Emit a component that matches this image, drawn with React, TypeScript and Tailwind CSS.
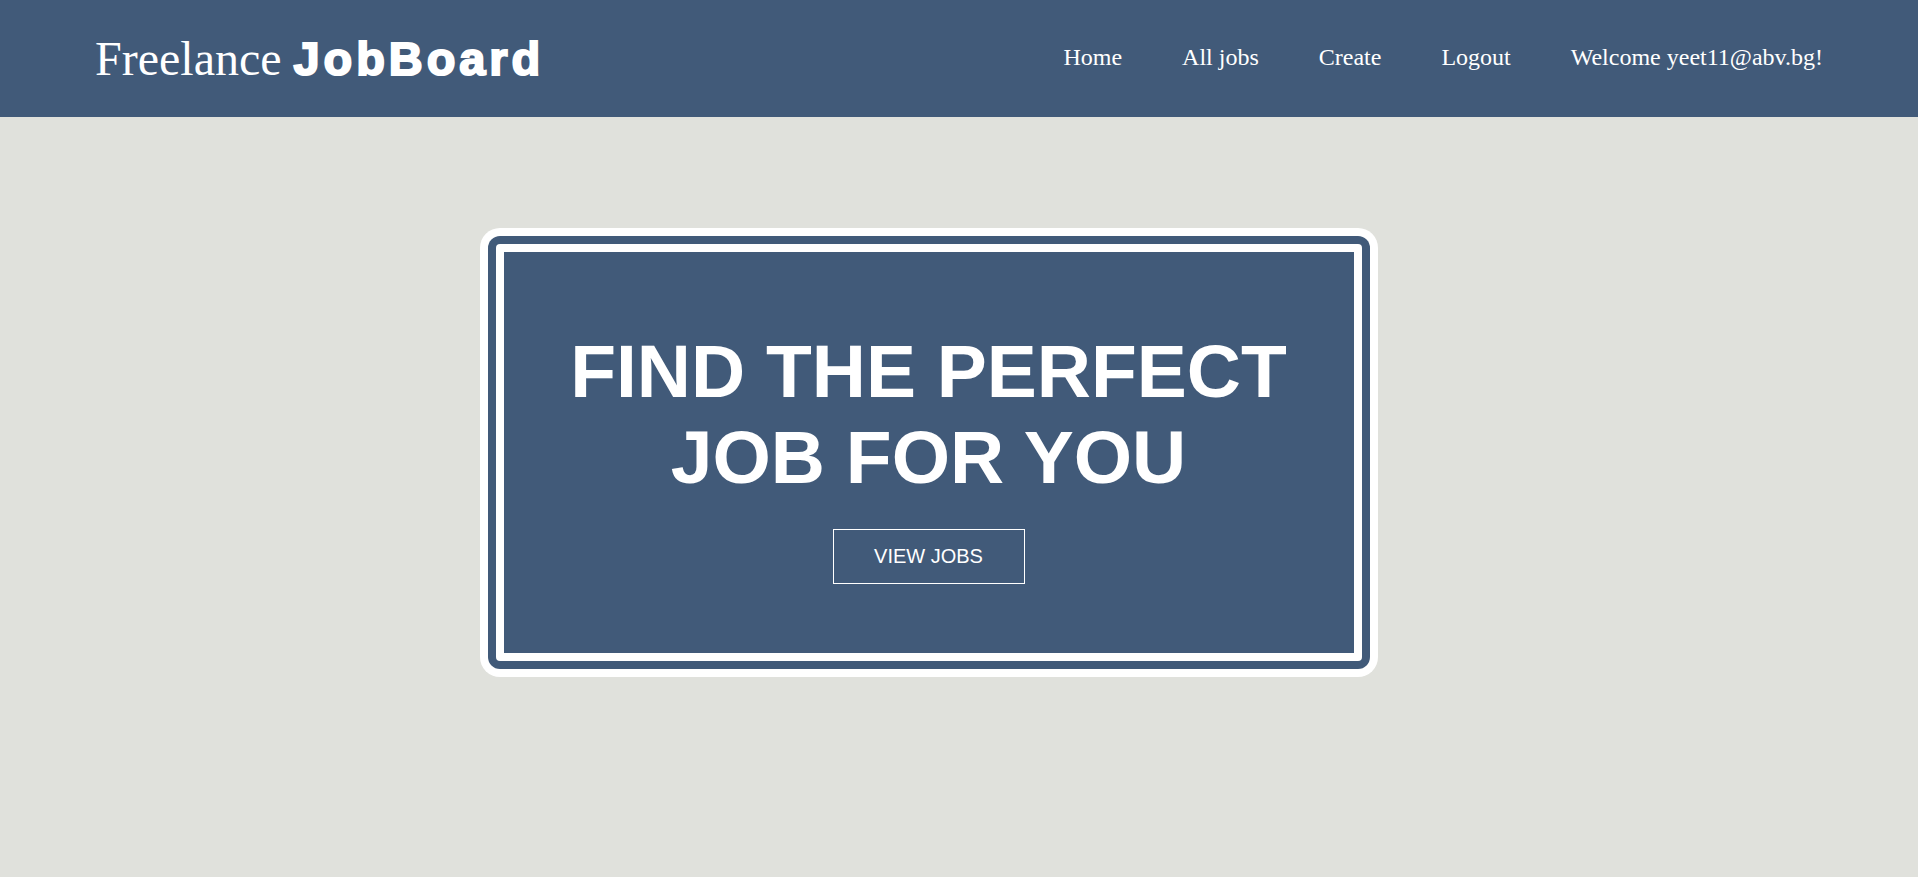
export default function App() {
  const navItems = ['Home', 'All jobs', 'Create', 'Logout']

  return (
    <main className="min-h-screen bg-[#e0e1dc]">
      {/* header */}
      <header className="h-[117px] bg-[#415a79] flex items-center justify-between pl-[95px] pr-[95px] text-white">
        <h1 className="text-[48px] leading-[53px] font-['Liberation_Serif',serif] font-normal whitespace-nowrap">
          Freelance{' '}
          <span className="font-['Liberation_Sans',Arial,sans-serif] font-bold text-[47px] tracking-[3.9px] [-webkit-text-stroke:2px_white]">
            JobBoard
          </span>
        </h1>

        <nav className="flex items-center gap-[60px] text-[24px] font-['Liberation_Serif',serif] -mt-[3px]">
          {navItems.map((item) => (
            <a key={item} href="#" className="text-white whitespace-nowrap">
              {item}
            </a>
          ))}
          <span className="whitespace-nowrap">Welcome yeet11@abv.bg!</span>
        </nav>
      </header>

      {/* hero */}
      <section className="pt-[111px] pl-[25%]">
        <div className="w-[898px] bg-white p-2 rounded-[20px]">
          <div className="bg-[#415a79] p-2 rounded-[12px]">
            <div className="bg-white p-2 rounded-[4px]">
              <div className="h-[401px] bg-[#415a79] flex flex-col items-center pt-[76px] text-white font-['Liberation_Sans',Arial,sans-serif]">
                <h2 className="text-[75px] leading-[86px] font-bold text-center">
                  FIND THE PERFECT
                  <br />
                  JOB FOR YOU
                </h2>
                <button className="mt-[29px] w-[192px] h-[55px] border border-white text-[20px] leading-[23px] text-white">
                  VIEW JOBS
                </button>
              </div>
            </div>
          </div>
        </div>
      </section>
    </main>
  )
}
